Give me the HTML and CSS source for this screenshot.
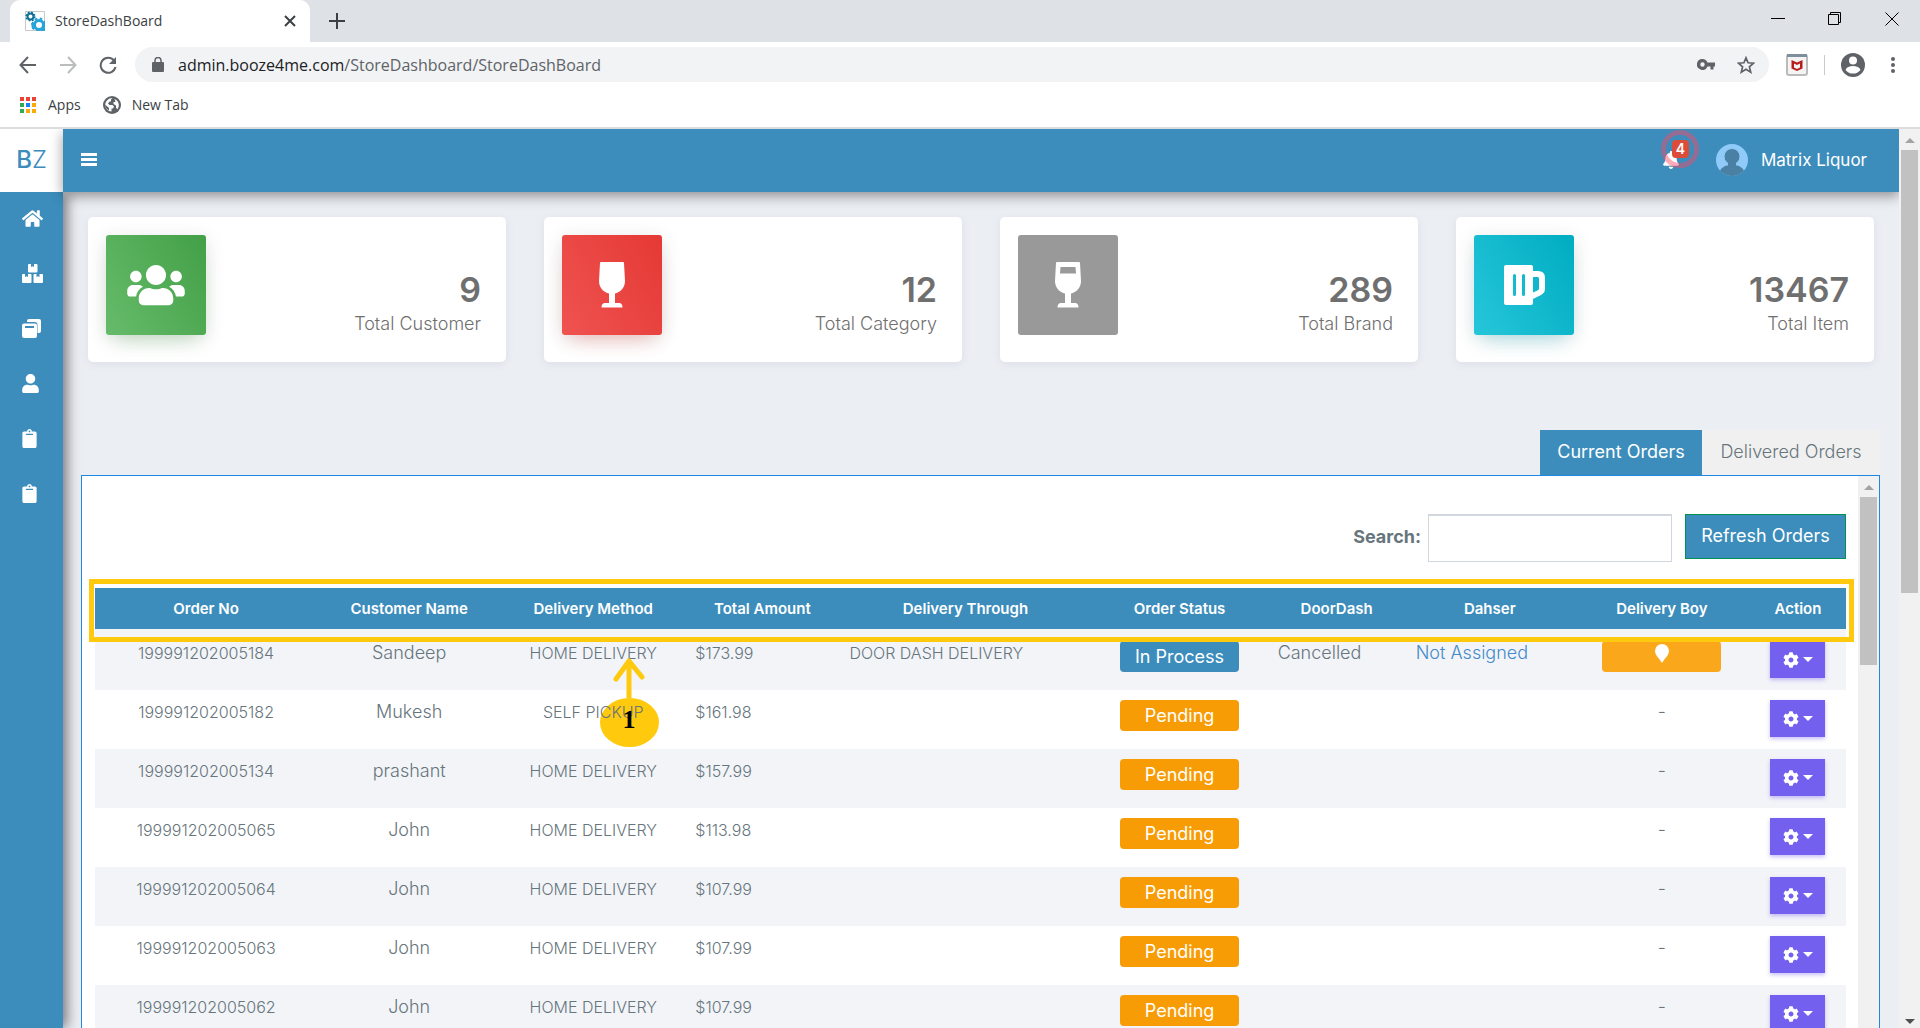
FILE: index.html
```html
<!DOCTYPE html>
<html lang="en">
<head>
<meta charset="utf-8">
<title>StoreDashBoard</title>
<link rel="stylesheet" href="styles.css">
</head>
<body>
<svg class="sprite" aria-hidden="true">
  <symbol id="clipboard" viewBox="0 0 384 512"><path d="M384 112v352c0 26.5-21.5 48-48 48H48c-26.5 0-48-21.5-48-48V112c0-26.5 21.5-48 48-48h80c0-35.3 28.7-64 64-64s64 28.7 64 64h80c26.5 0 48 21.5 48 48zM192 40c-13.3 0-24 10.7-24 24s10.7 24 24 24 24-10.7 24-24-10.7-24-24-24m96 114v-20a6 6 0 0 0-6-6H102a6 6 0 0 0-6 6v20a6 6 0 0 0 6 6h180a6 6 0 0 0 6-6z"/></symbol>
  <symbol id="cog" viewBox="0 0 512 512"><path d="M487.4 315.7l-42.6-24.6c4.3-23.2 4.3-47 0-70.2l42.6-24.6c4.9-2.8 7.1-8.6 5.5-14-11.1-35.6-30-67.8-54.7-94.6-3.8-4.1-10-5.1-14.8-2.3L380.8 110c-17.9-15.4-38.5-27.3-60.8-35.1V25.8c0-5.6-3.9-10.5-9.4-11.7-36.7-8.2-74.3-7.8-109.2 0-5.5 1.2-9.4 6.1-9.4 11.7V75c-22.2 7.9-42.8 19.8-60.8 35.1L88.7 85.5c-4.9-2.8-11-1.9-14.8 2.3-24.7 26.7-43.6 58.9-54.7 94.6-1.7 5.4.6 11.2 5.5 14L67.3 221c-4.3 23.2-4.3 47 0 70.2l-42.6 24.6c-4.9 2.8-7.1 8.6-5.5 14 11.1 35.6 30 67.8 54.7 94.6 3.8 4.1 10 5.1 14.8 2.3l42.6-24.6c17.9 15.4 38.5 27.3 60.8 35.1v49.2c0 5.6 3.9 10.5 9.4 11.7 36.7 8.2 74.3 7.8 109.2 0 5.5-1.2 9.4-6.1 9.4-11.7v-49.2c22.2-7.9 42.8-19.8 60.8-35.1l42.6 24.6c4.9 2.8 11 1.9 14.8-2.3 24.7-26.7 43.6-58.9 54.7-94.6 1.5-5.5-.7-11.3-5.6-14.1zM256 336c-44.1 0-80-35.9-80-80s35.9-80 80-80 80 35.9 80 80-35.9 80-80 80z"/></symbol>
</svg>

<header class="browser">
  <div class="tabstrip">
    <div class="tab">
      <svg class="favicon" viewBox="0 0 20 20"><path d="M.5.5h19v19H.5z" fill="#fff" stroke="#c8c8c8"/><circle cx="5.500" cy="5.500" r="3" fill="none" stroke="#0f7196" stroke-width="2"/><circle cx="5.500" cy="5.500" r="4.300" fill="none" stroke="#0f7196" stroke-width="1.500" stroke-dasharray="1.700 1.700"/><circle cx="14" cy="14" r="4.500" fill="none" stroke="#29a3dc" stroke-width="3"/><circle cx="14" cy="14" r="6.500" fill="none" stroke="#29a3dc" stroke-width="2" stroke-dasharray="2.600 2.500"/><path d="M17 12v8h3v-8zM6 12h3v6H7z" fill="#29a3dc"/></svg>
      <span class="tab-title">StoreDashBoard</span>
      <button class="plain" aria-label="Close tab"><svg width="12" height="12" viewBox="0 0 12 12"><path d="M1 1l10 10M11 1L1 11" stroke="#3c4043" stroke-width="2"/></svg></button>
    </div>
    <button class="plain new-tab" aria-label="New tab"><svg width="16" height="16" viewBox="0 0 16 16"><path d="M8 0v16M0 8h16" stroke="#3c4043" stroke-width="2"/></svg></button>
    <div class="window-controls">
      <button class="plain" aria-label="Minimize"><svg width="14" height="14" viewBox="0 0 14 14"><path d="M0 6.500h14" stroke="#000"/></svg></button>
      <button class="plain" aria-label="Restore"><svg width="14" height="14" viewBox="0 0 14 14"><path d="M.5 2.500h10v10H.5zM2.500 2.500v-2h10v10h-2" fill="none" stroke="#000"/></svg></button>
      <button class="plain" aria-label="Close"><svg width="14" height="14" viewBox="0 0 14 14"><path d="M.5.5l13 13M13.500.5l-13 13" stroke="#000"/></svg></button>
    </div>
  </div>
  <div class="toolbar">
    <nav class="nav-buttons">
      <button class="plain" aria-label="Back"><svg width="18" height="18" viewBox="0 0 18 18"><path d="M17 9H2M9 1L1.500 9 9 17" fill="none" stroke="#5f6368" stroke-width="2"/></svg></button>
      <button class="plain" aria-label="Forward"><svg width="18" height="18" viewBox="0 0 18 18"><path d="M1 9h15M9 1l7.500 8L9 17" fill="none" stroke="#babcbe" stroke-width="2"/></svg></button>
      <button class="plain" aria-label="Reload"><svg width="18" height="18" viewBox="0 0 18 18"><path d="M15 4.500A7.500 7.500 0 1 0 16.500 11" fill="none" stroke="#5f6368" stroke-width="2"/><path d="M17 1v7h-7z" fill="#5f6368"/></svg></button>
    </nav>
    <div class="omnibox">
      <svg width="12" height="15" viewBox="0 0 12 15"><path d="M1 5h10q1 0 1 1v8q0 1-1 1H1q-1 0-1-1V6q0-1 1-1z" fill="#5f6368"/><path d="M3 6V3.500a3 3 0 0 1 6 0V6" fill="none" stroke="#5f6368" stroke-width="1.500"/></svg>
      <div class="url"><b>admin.booze4me.com</b>/StoreDashboard/StoreDashBoard</div>
      <button class="plain" aria-label="Saved passwords"><svg width="18" height="11" viewBox="0 0 18 11"><path d="M5.500 0a5.500 5.500 0 0 1 5 3.500H18v4h-1.500V10.500h-3V7.500h-3A5.500 5.500 0 1 1 5.500 0zm0 3.300a2.200 2.200 0 1 0 0 4.400 2.200 2.200 0 0 0 0-4.400z" fill="#5f6368"/></svg></button>
      <button class="plain" aria-label="Bookmark"><svg width="18" height="18" viewBox="0 0 18 18"><path d="M9 1.800l2.100 5 5.400.4-4.100 3.600 1.300 5.300L9 13.200l-4.700 2.900 1.300-5.300L1.500 7.200l5.400-.4z" fill="none" stroke="#5f6368" stroke-width="1.700"/></svg></button>
    </div>
    <svg width="22" height="22" viewBox="0 0 22 22"><rect x="1" y="1" width="20" height="20" rx="2" fill="#f4f4f4" stroke="#bbb" stroke-width="2"/><path d="M1 0h20v3H1z" fill="#7b909c"/><path d="M5.500 6l5.500 2.500L16.500 6v8.500L11 17l-5.500-2.500z" fill="#b71c1c"/><path d="M8 9.500l3 1.500 3-1.500v4l-3 1.500-3-1.500z" fill="#f4f4f4"/></svg>
    <span class="divider"></span>
    <button class="plain" aria-label="Profile"><svg width="24" height="24" viewBox="0 0 24 24"><circle cx="12" cy="12" r="12" fill="#5f6368"/><circle cx="12" cy="7.500" r="4" fill="#fff"/><path d="M4.500 17c1-3 4-4 7.500-4s6.500 1 7.500 4c-2 2.500-4.500 3.600-7.500 3.600S6.500 19.500 4.500 17z" fill="#fff"/></svg></button>
    <button class="plain menu-dots" aria-label="Menu"><svg width="4" height="16" viewBox="0 0 4 16" fill="#5f6368"><circle cx="2" cy="2" r="2"/><circle cx="2" cy="8" r="2"/><circle cx="2" cy="14" r="2"/></svg></button>
  </div>
  <div class="bookmarks">
    <a href="#"><svg width="17" height="17" viewBox="0 0 17 17"><path d="M0 0h4v4H0zM6 0h4v4H6zM12 0h4v4h-4z" fill="#ea4335"/><path d="M0 6h4v4H0zM0 12h4v4H0z" fill="#34a853"/><path d="M6 6h4v4H6z" fill="#1a82f7"/><path d="M12 6h4v4h-4zM6 12h4v4H6zM12 12h4v4h-4z" fill="#fbab05"/></svg>Apps</a>
    <a href="#"><svg width="18" height="18" viewBox="0 0 18 18"><circle cx="9" cy="9" r="9" fill="#5f6368"/><path d="M9.500 2L8 3.500v2H6.500L5 7.500l1.500 1.500h3l1.500 1.500-1 2H8.500V15.500C5 15.500 2.200 12.500 2.200 9S5.500 2 9.500 2z" fill="#fff"/><path d="M2 8.500L6 12v2.500C3.500 13 2 11 2 8.500z" fill="#5f6368"/><path d="M11.500 3c2.500 1 4.300 3.300 4.300 6 0 1.500-.5 3-1.500 4.200L13 11.500V9.500l-2.500-1.500V6h2z" fill="#fff"/></svg>New Tab</a>
  </div>
</header>

<div class="viewport">
  <div class="app">
    <header class="topbar">
      <a class="logo" href="#"><b>B</b>Z</a>
      <div class="bar">
        <button class="plain" aria-label="Toggle menu"><svg width="16" height="13" viewBox="0 0 16 13"><path d="M0 0h16v3H0zM0 5h16v3H0zM0 10h16v3H0z" fill="#fff"/></svg></button>
        <div class="account">
          <button class="plain bell" aria-label="Notifications">
            <svg width="16" height="18" viewBox="0 0 448 512" fill="#fff"><path d="M224 512c35.320 0 63.970-28.650 63.970-64H160.030c0 35.350 28.650 64 63.970 64zm215.390-149.710c-19.320-20.760-55.470-51.990-55.470-154.290 0-77.700-54.480-139.900-127.940-155.160V32c0-17.670-14.320-32-31.980-32s-31.980 14.330-31.980 32v20.840C118.560 68.100 64.080 130.300 64.080 208c0 102.300-36.150 133.530-55.470 154.290-6 6.450-8.660 14.160-8.610 21.710.11 16.400 12.980 32 32.100 32h383.800c19.120 0 32-15.600 32.100-32 .05-7.550-2.610-15.270-8.610-21.710z"/></svg>
            <span class="pulse"></span><span class="count">4</span>
          </button>
          <svg width="32" height="32" viewBox="0 0 32 32"><clipPath id="av"><circle cx="16" cy="16" r="16"/></clipPath><g clip-path="url(#av)"><path d="M0 0h32v32H0z" fill="#90caf9"/><path d="M2 32c2-9 7-11 14-11s12 2 14 11z" fill="#4a80a3"/><circle cx="16" cy="12.500" r="8" fill="#4a80a3" stroke="#90caf9"/><path d="M12 17h8v6h-8z" fill="#4a80a3"/></g></svg>
          <span>Matrix Liquor</span>
        </div>
      </div>
    </header>
    <div class="body">
      <nav class="sidebar">
        <a href="#" aria-label="Home"><svg width="21" height="19" viewBox="0 0 576 512"><path d="M280.370 148.260L96 300.110V464a16 16 0 0 0 16 16l112.060-.29a16 16 0 0 0 15.920-16V368a16 16 0 0 1 16-16h64a16 16 0 0 1 16 16v95.640a16 16 0 0 0 16 16.050L464 480a16 16 0 0 0 16-16V300L295.670 148.260a12.190 12.190 0 0 0-15.300 0zM571.600 251.470L488 182.560V44.050a12 12 0 0 0-12-12h-56a12 12 0 0 0-12 12v72.610L318.470 43a48 48 0 0 0-61 0L4.340 251.470a12 12 0 0 0-1.600 16.900l25.500 31A12 12 0 0 0 45.150 301l235.220-193.740a12.190 12.190 0 0 1 15.300 0L530.900 301a12 12 0 0 0 16.900-1.600l25.500-31a12 12 0 0 0-1.700-16.930z"/></svg></a>
        <a href="#" aria-label="Stock"><svg width="21" height="19" viewBox="0 0 21 19"><path d="M6 1q0-1 1-1h2v3l1.500-.7L12 3V0h2.500q1 0 1 1v6.500q0 1-1 1H7q-1 0-1-1zM0 11q0-1 1-1h2v3l1.500-.7L6 13v-3h2.500q1 0 1 1v7q0 1-1 1H1q-1 0-1-1zM11.500 11q0-1 1-1h2v3l1.500-.7 1.500.7v-3H20q1 0 1 1v7q0 1-1 1h-7.500q-1 0-1-1z"/></svg></a>
        <a href="#" aria-label="Catalog"><svg width="19" height="19" viewBox="0 0 19 19"><path d="M5 3V2q0-2 2-2h10q2 0 2 2v10q0 2-2 2h-1.500V6q0-3-3-3z"/><path fill-rule="evenodd" d="M2 4.500h11q2 0 2 2V17q0 2-2 2H2q-2 0-2-2V6.500q0-2 2-2zM3 7v2h9V7z"/></svg></a>
        <a href="#" aria-label="Users"><svg width="17" height="19" viewBox="0 0 448 512"><path d="M224 256c70.700 0 128-57.300 128-128S294.700 0 224 0 96 57.300 96 128s57.300 128 128 128zm89.600 32h-16.700c-22.200 10.200-46.900 16-72.900 16s-50.600-5.800-72.900-16h-16.700C60.200 288 0 348.200 0 422.400V464c0 26.500 21.500 48 48 48h352c26.500 0 48-21.500 48-48v-41.600c0-74.200-60.200-134.400-134.400-134.400z"/></svg></a>
        <a href="#" aria-label="Reports"><svg width="15" height="19"><use href="#clipboard"/></svg></a>
        <a href="#" aria-label="Orders"><svg width="15" height="19"><use href="#clipboard"/></svg></a>
      </nav>
      <main class="content">
        <section class="cards">
          <article class="card">
            <div class="tile green"><svg width="58" height="46" viewBox="0 0 640 512"><path d="M96 224c35.300 0 64-28.700 64-64s-28.700-64-64-64-64 28.700-64 64 28.700 64 64 64zm448 0c35.300 0 64-28.700 64-64s-28.700-64-64-64-64 28.700-64 64 28.700 64 64 64zm32 32h-64c-17.600 0-33.500 7.100-45.100 18.600 40.300 22.100 68.900 62 75.100 109.400h66c17.700 0 32-14.300 32-32v-32c0-35.300-28.700-64-64-64zm-256 0c61.900 0 112-50.100 112-112S381.900 32 320 32 208 82.100 208 144s50.100 112 112 112zm76.800 32h-8.300c-20.800 10-43.900 16-68.500 16s-47.600-6-68.500-16h-8.300C179.600 288 128 339.600 128 403.200V432c0 26.500 21.500 48 48 48h288c26.500 0 48-21.500 48-48v-28.800c0-63.600-51.600-115.200-115.200-115.200zm-223.700-13.400C161.500 263.100 145.600 256 128 256H64c-35.300 0-64 28.700-64 64v32c0 17.700 14.300 32 32 32h65.900c6.300-47.400 34.900-87.300 75.200-109.400z"/></svg></div>
            <div class="stat"><strong>9</strong><span>Total Customer</span></div>
          </article>
          <article class="card">
            <div class="tile red"><svg width="26" height="46" viewBox="0 0 26 46"><path d="M2 0h22q1 0 1 1l1 18c0 7-5 11.500-10 12.500V41h4q3.500 0 3.500 4.500h-21Q2.500 41 6 41h4v-9.500C5 30.500 0 26 0 19L1 1q0-1 1-1z"/></svg></div>
            <div class="stat"><strong>12</strong><span>Total Category</span></div>
          </article>
          <article class="card">
            <div class="tile grey"><svg width="26" height="46" viewBox="0 0 26 46"><path fill-rule="evenodd" d="M2 0h22q1 0 1 1l1 18c0 7-5 11.500-10 12.500V41h4q3.500 0 3.500 4.500h-21Q2.500 41 6 41h4v-9.500C5 30.500 0 26 0 19L1 1q0-1 1-1zM5.500 5L5 11.500h16L20.500 5z"/></svg></div>
            <div class="stat"><strong>289</strong><span>Total Brand</span></div>
          </article>
          <article class="card">
            <div class="tile cyan"><svg width="41" height="40" viewBox="0 0 41 40"><path fill-rule="evenodd" d="M2 0h25q2 0 2 2v4h5q7 0 7 7v10.500q0 4.500-4 6.500l-8 4v4q0 2-2 2H2q-2 0-2-2V2q0-2 2-2zM29 12v15.500l4.500-2q1.500-.7 1.500-2V13.500q0-1.500-1.500-1.500zM10.500 9Q9 9 9 10.500v19Q9 31 10.500 31t1.500-1.500v-19Q12 9 10.500 9zM19.500 9q-1.500 0-1.500 1.500v19q0 1.500 1.500 1.500t1.500-1.500v-19Q21 9 19.500 9z"/></svg></div>
            <div class="stat"><strong>13467</strong><span>Total Item</span></div>
          </article>
        </section>

        <section class="orders">
          <div class="tabs">
            <button class="order-tab active">Current Orders</button>
            <button class="order-tab">Delivered Orders</button>
          </div>
          <div class="panel">
            <div class="panel-body">
              <div class="filters">
                <label for="q">Search:</label>
                <input id="q" type="text">
                <button class="refresh">Refresh Orders</button>
              </div>
              <div class="table-wrap">
                <table>
                  <thead><tr>
                    <th class="c-no">Order No</th><th class="c-mid">Customer Name</th><th class="c-mid">Delivery Method</th><th class="c-amt">Total Amount</th><th class="c-thr">Delivery Through</th><th class="c-btn">Order Status</th><th class="c-dd">DoorDash</th><th class="c-dash">Dahser</th><th class="c-btn">Delivery Boy</th><th class="c-act">Action</th>
                  </tr></thead>
                  <tbody>
                    <tr><td>199991202005184</td><td class="text">Sandeep</td><td>HOME DELIVERY</td><td class="left">$173.99</td><td class="left">DOOR DASH DELIVERY</td><td><span class="status process">In Process</span></td><td class="left text">Cancelled</td><td class="left text"><a href="#">Not Assigned</a></td><td><button class="locate" aria-label="Locate"><svg width="14" height="19" viewBox="0 0 14 19"><path d="M7 0a7 7 0 0 1 7 7c0 4-4 7-7 12C4 14 0 11 0 7a7 7 0 0 1 7-7z" fill="#fff"/></svg></button></td><td><button class="action" aria-label="Actions"><svg width="16" height="16"><use href="#cog"/></svg><i></i></button></td></tr>
                    <tr><td>199991202005182</td><td class="text">Mukesh</td><td><span class="raised">SELF PICKUP</span></td><td class="left">$161.98</td><td></td><td><span class="status">Pending</span></td><td></td><td></td><td class="text">-</td><td><button class="action" aria-label="Actions"><svg width="16" height="16"><use href="#cog"/></svg><i></i></button></td></tr>
                    <tr><td>199991202005134</td><td class="text">prashant</td><td>HOME DELIVERY</td><td class="left">$157.99</td><td></td><td><span class="status">Pending</span></td><td></td><td></td><td class="text">-</td><td><button class="action" aria-label="Actions"><svg width="16" height="16"><use href="#cog"/></svg><i></i></button></td></tr>
                    <tr><td>199991202005065</td><td class="text">John</td><td>HOME DELIVERY</td><td class="left">$113.98</td><td></td><td><span class="status">Pending</span></td><td></td><td></td><td class="text">-</td><td><button class="action" aria-label="Actions"><svg width="16" height="16"><use href="#cog"/></svg><i></i></button></td></tr>
                    <tr><td>199991202005064</td><td class="text">John</td><td>HOME DELIVERY</td><td class="left">$107.99</td><td></td><td><span class="status">Pending</span></td><td></td><td></td><td class="text">-</td><td><button class="action" aria-label="Actions"><svg width="16" height="16"><use href="#cog"/></svg><i></i></button></td></tr>
                    <tr><td>199991202005063</td><td class="text">John</td><td>HOME DELIVERY</td><td class="left">$107.99</td><td></td><td><span class="status">Pending</span></td><td></td><td></td><td class="text">-</td><td><button class="action" aria-label="Actions"><svg width="16" height="16"><use href="#cog"/></svg><i></i></button></td></tr>
                    <tr><td>199991202005062</td><td class="text">John</td><td>HOME DELIVERY</td><td class="left">$107.99</td><td></td><td><span class="status">Pending</span></td><td></td><td></td><td class="text">-</td><td><button class="action" aria-label="Actions"><svg width="16" height="16"><use href="#cog"/></svg><i></i></button></td></tr>
                  </tbody>
                </table>
                <div class="highlight"></div>
                <div class="callout">
                  <svg width="32" height="40" viewBox="0 0 32 40"><path d="M16 40V3M3 21L16 3l13 16" fill="none" stroke="#ffc90e" stroke-width="5" stroke-linecap="round" stroke-linejoin="round"/></svg>
                  <div class="disc"><b>1</b></div>
                </div>
              </div>
            </div>
            <div class="scrollbar inner"><i class="arrow up"></i><div class="thumb"></div></div>
          </div>
        </section>
      </main>
    </div>
  </div>
  <div class="scrollbar"><i class="arrow up"></i><div class="thumb"></div><i class="arrow down"></i></div>
</div>
</body>
</html>
```

FILE: styles.css
```css
* { box-sizing: border-box; }
body {
  margin: 0;
  height: 100vh;
  overflow: hidden;
  display: flex;
  flex-direction: column;
  font: 300 16px/24px Inter, sans-serif;
  color: #67757c;
}
svg { display: block; flex: none; }
a { color: inherit; text-decoration: none; }
button { font: inherit; border: 0; cursor: pointer; }
.plain { background: none; padding: 0; display: flex; }
.sprite { position: absolute; width: 0; height: 0; }

/* Browser frame */
.browser {
  flex: none;
  border-bottom: 2px solid #dadce0;
  background: #fff;
  font: 400 14px/20px "Open Sans", sans-serif;
  color: #3c4043;
}
.tabstrip { height: 42px; background: #dee1e6; display: flex; align-items: center; padding-left: 10px; }
.tab {
  width: 300px;
  height: 42px;
  padding: 0 14px 0 15px;
  display: flex;
  align-items: center;
  gap: 10px;
  background: #fff;
  border-radius: 10px 10px 0 0;
}
.favicon { width: 20px; height: 20px; }
.tab-title { flex: 1; }
.new-tab { margin-left: 19px; }
.window-controls { margin-left: auto; padding: 0 21px 5px 0; display: flex; gap: 43px; }
.toolbar { height: 45px; display: flex; align-items: center; padding: 0 25px 0 19px; }
.nav-buttons { display: flex; gap: 22px; margin-right: 18px; }
.omnibox {
  flex: 1;
  height: 35px;
  padding: 0 14px 0 17px;
  display: flex;
  align-items: center;
  gap: 22px;
  border-radius: 18px;
  background: #f1f3f4;
  margin-right: 17px;
}
.url { flex: 1; margin-left: -8px; font-size: 16px; color: #5f6368; }
.url b { font-weight: 400; color: #202124; }
.divider { width: 1px; height: 20px; margin: 0 16px; background: #c8cacd; }
.menu-dots { margin-left: 26px; }
.bookmarks { height: 40px; display: flex; align-items: center; gap: 22px; padding: 0 20px 4px; }
.bookmarks a { display: flex; align-items: center; gap: 11px; }

/* Dashboard */
.viewport { flex: 1; min-height: 0; display: flex; }
.app { flex: 1; min-width: 0; display: flex; flex-direction: column; background: #ebeef3; overflow: hidden; }
.topbar { height: 63px; flex: none; display: flex; position: relative; z-index: 2; }
.logo {
  width: 63px;
  display: flex;
  align-items: center;
  justify-content: center;
  padding-bottom: 2px;
  background: #fff;
  color: #3c8dbc;
  font-size: 24px;
}
.logo b { font-weight: 500; }
.bar {
  flex: 1;
  display: flex;
  align-items: center;
  justify-content: space-between;
  padding: 0 32px 2px 18px;
  background: #3c8dbc;
  box-shadow: 0 4px 12px rgba(0, 0, 0, .4);
}
.account { display: flex; align-items: center; font-size: 17px; font-weight: 400; color: #fff; gap: 13px; }
.bell { position: relative; margin-right: 24px; }
.count {
  position: absolute;
  left: 9px;
  top: -11px;
  width: 17px;
  height: 18px;
  border-radius: 4px;
  background: #dd4b39;
  color: #fff;
  font: 600 14px/18px Inter, sans-serif;
  text-align: center;
}
.pulse {
  position: absolute;
  left: -2px;
  top: -21px;
  width: 38px;
  height: 38px;
  border: 5px solid rgba(255, 70, 100, .45);
  border-radius: 50%;
}
.body { flex: 1; min-height: 0; display: flex; }
.sidebar {
  width: 63px;
  flex: none;
  background: #3c8dbc;
  box-shadow: 4px 0 12px rgba(0, 0, 0, .5);
  position: relative;
}
.sidebar a { height: 55px; padding: 0 0 2px 22px; display: flex; align-items: center; }
.sidebar svg, .tile svg, .action svg { fill: #fff; }
.content { flex: 1; min-width: 0; padding: 25px 19px 0 18px; }
.cards { display: grid; grid-template-columns: repeat(4, 1fr); gap: 38px; padding: 0 6px 0 7px; }
.card {
  height: 145px;
  padding: 18px 25px 18px 18px;
  display: flex;
  justify-content: space-between;
  background: #fff;
  border-radius: 5px;
  box-shadow: 0 2px 8px rgba(100, 100, 140, .1);
}
.tile {
  width: 100px;
  height: 100px;
  display: grid;
  place-items: center;
  border-radius: 3px;
}
.green { background: linear-gradient(60deg, #66bb6a, #43a047); box-shadow: 0 12px 20px -10px rgba(76, 175, 80, .3), 0 4px 20px rgba(0, 0, 0, .12); }
.red { background: linear-gradient(60deg, #ef5350, #e53935); box-shadow: 0 12px 20px -10px rgba(244, 67, 54, .3), 0 4px 20px rgba(0, 0, 0, .12); }
.grey { background: #999; }
.cyan { background: linear-gradient(60deg, #26c6da, #00acc1); box-shadow: 0 12px 20px -10px rgba(0, 188, 212, .3), 0 4px 20px rgba(0, 0, 0, .12); }
.stat { padding-top: 35px; text-align: right; color: #6f6f6f; font-size: 18px; }
.stat strong { display: block; font-size: 34px; line-height: 40px; font-weight: 600; }
.stat span { display: block; line-height: 28px; }

.orders { margin-top: 68px; }
.tabs { display: flex; justify-content: flex-end; }
.order-tab { width: 178px; height: 45px; padding: 0 0 2px; background: #f0f0f0; color: #67757c; font-size: 18px; font-weight: 300; }
.active { width: 162px; background: #3c8dbc; color: #fff; font-weight: 400; }
.panel { display: flex; border: 1px solid #1e88e5; background: #fff; }
.panel-body { flex: 1; min-width: 0; padding: 38px 12px 0 13px; }
.filters { display: flex; justify-content: flex-end; align-items: flex-start; }
.filters label { font-size: 18px; line-height: 46px; font-weight: 700; margin-right: 7px; }
.filters input {
  width: 244px;
  height: 48px;
  margin-right: 13px;
  border: 1px solid #d2d6de;
  border-top-width: 2px;
  background: #fff;
}
.refresh { height: 45px; width: 161px; padding: 0 0 2px; border: 1px solid #00904f; background: #3c8dbc; color: #fff; font-size: 18px; font-weight: 400; }
.table-wrap { position: relative; margin-top: 26px; }
table { width: 100%; table-layout: fixed; border-collapse: collapse; }
th { height: 41px; padding: 0; background: #3c8dbc; color: #fff; font-size: 15px; font-weight: 600; }
td { height: 59px; padding: 10px 10px 0; text-align: center; vertical-align: top; }
td.left { text-align: left; }
td.text { font-size: 18px; }
td a { color: #428bca; }
tbody tr:nth-child(odd) { background: #f2f4f8; }
tbody tr:first-child td { height: 61px; padding-top: 12px; }
.c-no { width: 222px; }
.c-mid { width: 184px; }
.c-amt { width: 154px; }
.c-thr { width: 252px; }
.c-btn { width: 176px; }
.c-dd { width: 138px; }
.c-dash { width: 168px; }
.c-act { width: 96px; }
.status, .locate {
  width: 119px;
  height: 31px;
  margin: 0 auto;
  display: block;
  border-radius: 4px;
  background: #f89c06;
  color: #fff;
  font-size: 18px;
  font-weight: 400;
  line-height: 31px;
}
.process { background: #3c8dbc; }
.locate { padding: 3px 0 9px; background: #fba71b; }
.locate svg { margin: 0 auto; }
.action {
  width: 55px;
  height: 37px;
  margin: 0 auto;
  padding: 0;
  display: flex;
  align-items: center;
  justify-content: center;
  gap: 4px;
  background: #7460ee;
  box-shadow: 0 2px 4px rgba(116, 96, 238, .4);
}
.action i { border: 5px solid transparent; border-top-color: #fff; border-bottom: 0; }

/* Tutorial annotation over the table */
.highlight { position: absolute; left: -6px; right: -8px; top: -9px; height: 63px; border: 5px solid #ffc90e; }
.callout { position: absolute; left: 504px; top: 70px; width: 60px; display: flex; flex-direction: column; align-items: center; }
.disc {
  width: 59px;
  height: 49px;
  border-radius: 50%;
  background: #ffc90e;
  text-align: center;
}
.disc b { position: relative; z-index: 3; color: #000; font: 700 26px/44px "Liberation Serif", serif; }
.raised { position: relative; z-index: 2; }

/* Scrollbars */
.scrollbar { width: 21px; flex: none; background: #f1f1f1; display: flex; flex-direction: column; align-items: center; padding: 9px 0 4px; }
.arrow { border: 5px solid transparent; }
.up { border-top: 0; border-bottom-color: #a3a3a3; }
.down { border-bottom: 0; border-top-color: #505050; margin-top: auto; }
.thumb { width: 17px; height: 50%; margin-top: 7px; background: #c1c1c1; }
.inner .thumb { height: 168px; }
```
